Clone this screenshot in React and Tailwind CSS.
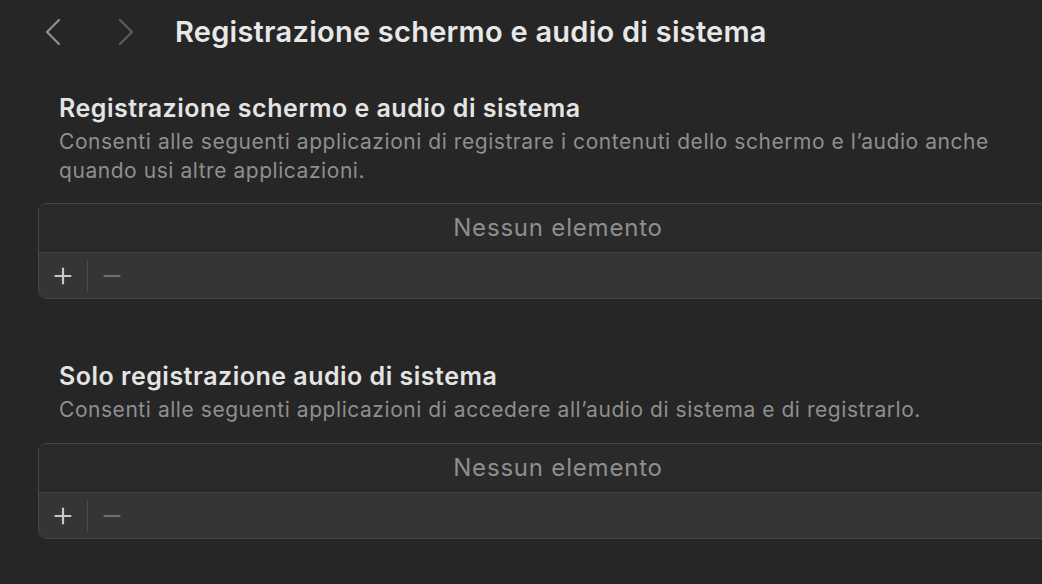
import React from 'react'

function Chevron({ dir, className }) {
  const d = dir === 'left' ? 'M15 2 L3 14 L15 26' : 'M3 2 L15 14 L3 26'
  return (
    <svg width="18" height="28" viewBox="0 0 18 28" className={className}>
      <path d={d} fill="none" stroke="currentColor" strokeWidth="2.4" strokeLinecap="round" strokeLinejoin="round" />
    </svg>
  )
}

function ListBox() {
  return (
    <div className="w-[1040px] rounded-[9px] border border-[#474747] overflow-hidden">
      <div className="h-[48px] bg-[#2a2a2a] flex items-center justify-center text-[24px] tracking-[0.8px] text-[#8e8e8e]">
        Nessun elemento
      </div>
      <div className="h-[46px] bg-[#353535] border-t border-[#404040] flex items-center">
        <div className="w-[48px] flex items-center justify-center">
          <svg width="18" height="18" viewBox="0 0 18 18">
            <path d="M9 1.5 V16.5 M1.5 9 H16.5" stroke="#c9c9c9" strokeWidth="2.2" strokeLinecap="round" />
          </svg>
        </div>
        <div className="w-px h-[32px] bg-[#4c4c4c]" />
        <div className="w-[48px] flex items-center justify-center">
          <svg width="18" height="18" viewBox="0 0 18 18">
            <path d="M1.5 9 H16.5" stroke="#6e6e6e" strokeWidth="2.2" strokeLinecap="round" />
          </svg>
        </div>
      </div>
    </div>
  )
}

export default function App() {
  return (
    <div className="w-[1042px] h-[584px] overflow-hidden bg-[#262626] font-['Inter',sans-serif]">
      <div className="h-16 flex items-center">
        <Chevron dir="left" className="ml-[44px] text-[#8c8c8c]" />
        <Chevron dir="right" className="ml-[55px] text-[#5c5c5c]" />
        <h1 className="ml-[40px] text-[29px] font-semibold text-[#e8e8e8] tracking-[0.25px]">
          Registrazione schermo e audio di sistema
        </h1>
      </div>

      <div className="pl-[38px]">
        <div className="pl-[21px] mt-[29px]">
          <h2 className="text-[25px] leading-[30px] font-semibold text-[#e4e4e4] tracking-[0.5px]">
            Registrazione schermo e audio di sistema
          </h2>
          <p className="mt-[4px] text-[21px] leading-[29px] text-[#8f8f8f] tracking-[0.55px]">
            Consenti alle seguenti applicazioni di registrare i contenuti dello schermo e l’audio anche<br />
            quando usi altre applicazioni.
          </p>
        </div>
        <div className="mt-[18px]">
          <ListBox />
        </div>

        <div className="pl-[21px] mt-[62px]">
          <h2 className="text-[25px] leading-[30px] font-semibold text-[#e4e4e4] tracking-[0.5px]">
            Solo registrazione audio di sistema
          </h2>
          <p className="mt-[4px] text-[21px] leading-[29px] text-[#8f8f8f] tracking-[0.55px]">
            Consenti alle seguenti applicazioni di accedere all’audio di sistema e di registrarlo.
          </p>
        </div>
        <div className="mt-[19px]">
          <ListBox />
        </div>
      </div>
    </div>
  )
}
